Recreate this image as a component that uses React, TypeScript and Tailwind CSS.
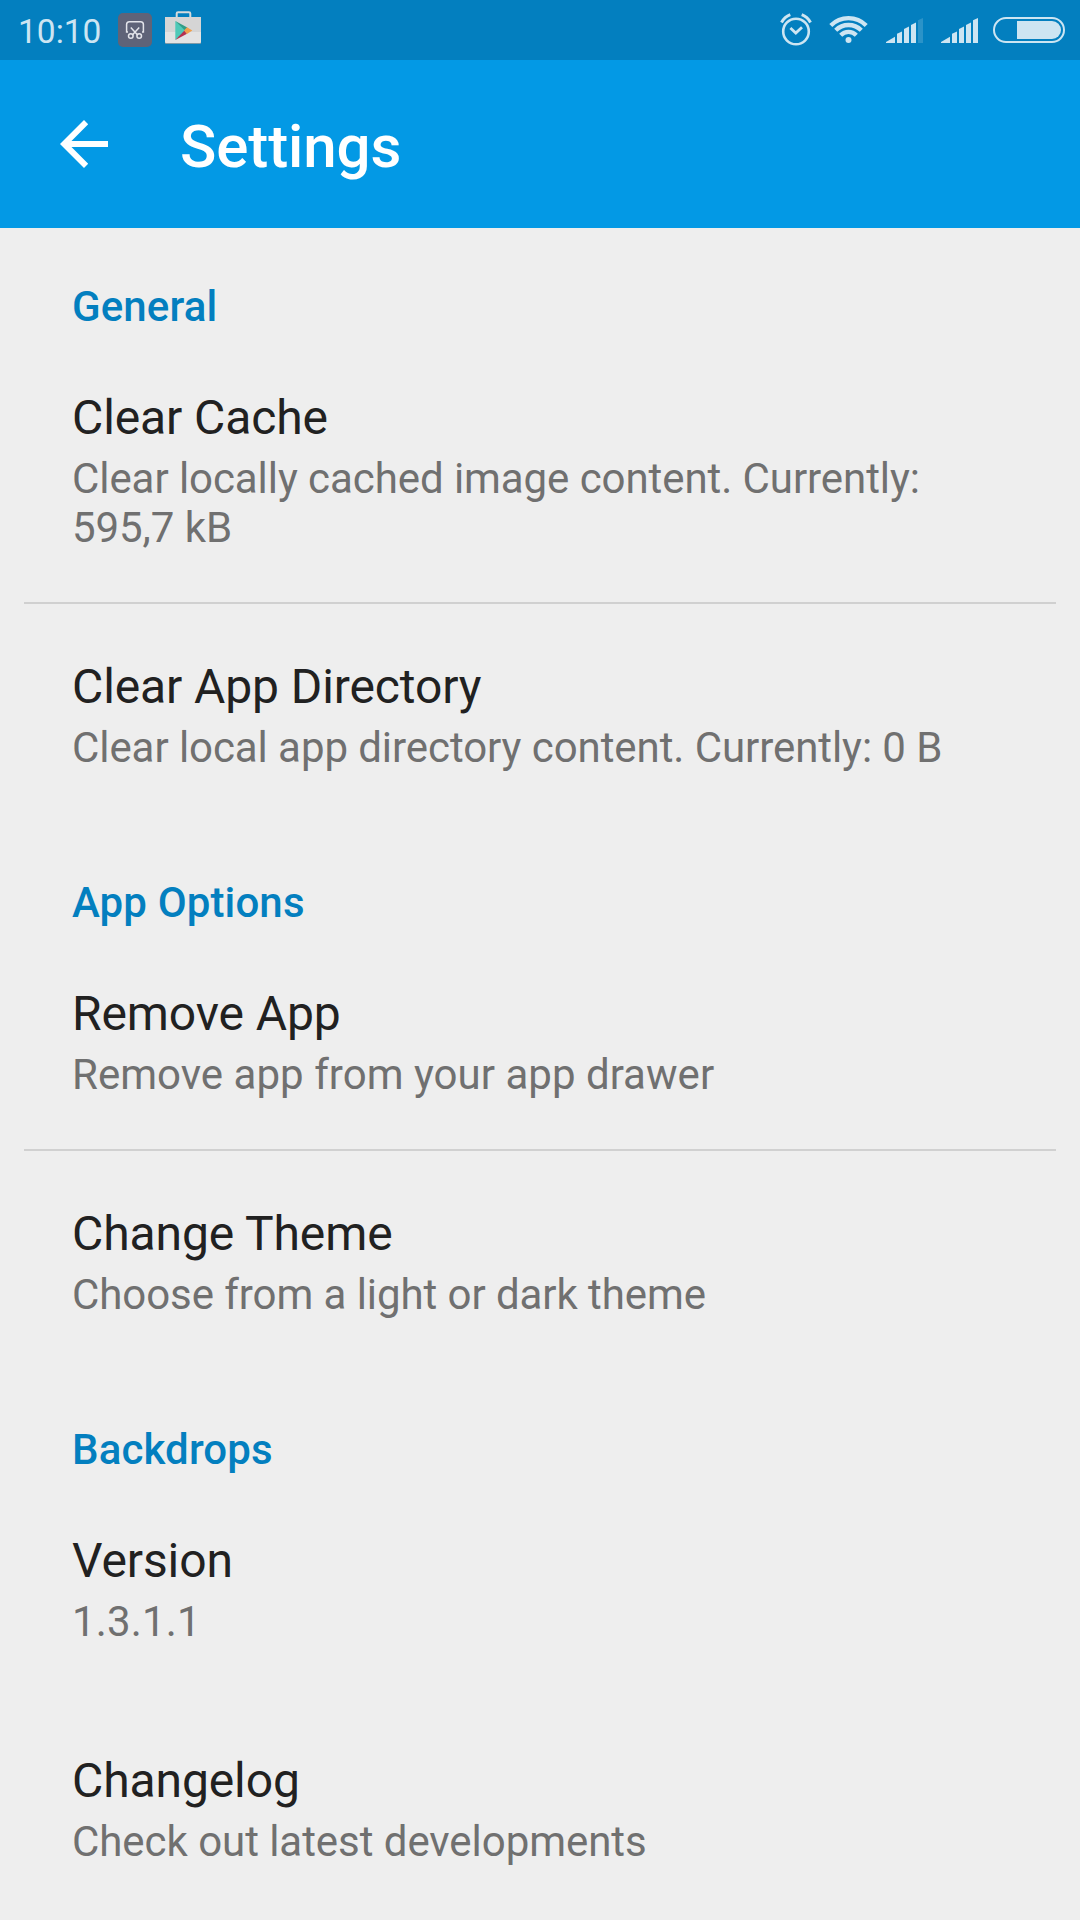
const sections = [
  {
    title: "General",
    divided: true,
    items: [
      { name: "Clear Cache", summary: "Clear locally cached image content. Currently: 595,7 kB", tracking: "tracking-[-0.07px]" },
      { name: "Clear App Directory", summary: "Clear local app directory content. Currently: 0 B", tracking: "tracking-[-0.07px]" }
    ]
  },
  {
    title: "App Options",
    divided: true,
    items: [
      { name: "Remove App", summary: "Remove app from your app drawer", tracking: "tracking-[0.03px]" },
      { name: "Change Theme", summary: "Choose from a light or dark theme", tracking: "tracking-[-0.07px]" }
    ]
  },
  {
    title: "Backdrops",
    divided: false,
    items: [
      { name: "Version", summary: "1.3.1.1", tracking: "tracking-[0.15px]" },
      { name: "Changelog", summary: "Check out latest developments", tracking: "tracking-[-0.05px]" }
    ]
  }
];

function ScreenshotIcon() {
  return (
    <svg width="34" height="34" viewBox="0 0 34 34" fill="none" stroke="#e3e4ea" strokeWidth="1.5">
      <rect width="34" height="34" rx="5" fill="#5f6378" stroke="none" />
      <path d="M10 19H8.6V11.5Q8.6 8.7 11.4 8.7H22.6Q25.4 8.7 25.4 11.5V19H24" />
      <path d="M12.8 14.5L19.6 22M21.2 14.5L14.4 22" />
      <circle cx="12.8" cy="23" r="2.3" />
      <circle cx="21.2" cy="23" r="2.3" />
    </svg>
  );
}

function PlayStoreIcon() {
  return (
    <svg width="36" height="34" viewBox="0 0 36 34">
      <path d="M11.7 7V3.6Q11.7 2.2 13.1 2.2H23.9Q25.3 2.2 25.3 3.6V7" fill="none" stroke="#d6dadb" strokeWidth="2" />
      <rect y="7" width="36" height="27" rx="1" fill="#7f9aa8" />
      <rect y="7" width="36" height="26" rx="1" fill="#e3e3e3" />
      <rect y="7" width="36" height="15" fill="#d5d5d5" />
      <path d="M10.3 11V30L21.5 20.5Z" fill="#4fc9b8" />
      <path d="M10.3 11L22.3 17.4L20 20.5Z" fill="#2f9d86" />
      <path d="M10.3 30L22 23.8L19.5 20.5Z" fill="#b5304f" />
      <path d="M22 17.2L27.3 20.5L22 24L19 20.5Z" fill="#f0a04c" />
    </svg>
  );
}

function AlarmIcon() {
  return (
    <svg width="32" height="34" viewBox="0 0 32 34" fill="none" stroke="#cde5f2">
      <circle cx="16" cy="19.5" r="12.8" strokeWidth="2.6" />
      <path d="M10.4 16L15.8 21L22 15.2" strokeWidth="2.8" />
      <path d="M1.5 10.5Q4.5 5 10.3 2.7M30.5 10.5Q27.5 5 21.7 2.7" strokeWidth="3" />
    </svg>
  );
}

function WifiIcon() {
  return (
    <svg width="39" height="28" viewBox="0 0 39 28" fill="none" stroke="#cde5f2" strokeWidth="4.3">
      <path d="M1.8 10.4A25 25 0 0 1 37.2 10.4" />
      <path d="M6.7 15.3A18.1 18.1 0 0 1 32.3 15.3" />
      <path d="M11.7 20.2A11 11 0 0 1 27.3 20.2" />
      <circle cx="19.5" cy="25" r="3" fill="#cde5f2" stroke="none" />
    </svg>
  );
}

function SignalIcon({ weak = false }: { weak?: boolean }) {
  return (
    <svg width="37" height="25" viewBox="0 0 37 25" fill="#cde5f2">
      <path d="M0 25V24L9 18.8V25Z" />
      <path d="M11 25V15.8L16 13.5V25Z" />
      <path d="M18 25V11L23 8.5V25Z" />
      <path d="M25 25V7L30 4.5V25Z" />
      <path d="M32 25V2.2L37 0V25Z" opacity={weak ? 0.2 : 1} />
    </svg>
  );
}

function BatteryIcon() {
  return (
    <svg width="72" height="26" viewBox="0 0 72 26">
      <rect x="1" y="1" width="70" height="24" rx="12" fill="none" stroke="#cde5f2" strokeWidth="2" />
      <path d="M24 4H59A9 9 0 0 1 59 22H24Z" fill="#cde5f2" />
    </svg>
  );
}

export default function App() {
  return (
    <div className="w-[1080px] h-[1920px] overflow-hidden bg-[#eeeeee] font-['Roboto',sans-serif]">
      {/* Status bar */}
      <div className="flex justify-between h-[60px] bg-[#037fbf]">
        <div className="flex items-start pl-[18px]">
          <span className="w-[100px] mt-[12px] text-[33.5px] leading-[39px] text-[#cde5f2]">10:10</span>
          <div className="mt-[13px]"><ScreenshotIcon /></div>
          <div className="mt-[10px] ml-[13px]"><PlayStoreIcon /></div>
        </div>
        <div className="flex items-start pr-[15px]">
          <div className="mt-[12px]"><AlarmIcon /></div>
          <div className="mt-[15px] ml-[17px]"><WifiIcon /></div>
          <div className="mt-[18px] ml-[18px]"><SignalIcon weak /></div>
          <div className="mt-[18px] ml-[18px]"><SignalIcon /></div>
          <div className="mt-[17px] ml-[15px]"><BatteryIcon /></div>
        </div>
      </div>

      {/* App bar */}
      <header className="flex items-center h-[168px] pl-[60px] bg-[#0399e5]">
        <svg width="48" height="48" viewBox="0 0 48 48" fill="#ffffff">
          <path d="M48 21H11.5L28.2 4.2L24 0L0 24L24 48L28.2 43.8L11.5 27H48Z" />
        </svg>
        <h1 className="ml-[72px] pt-[6px] text-[60px] leading-[70px] font-medium tracking-[-0.1px] text-white">Settings</h1>
      </header>

      <main>
        {sections.map((section) => (
          <section key={section.title}>
            <h2 className="px-[72px] pt-[54px] pb-[4px] text-[42px] leading-[49px] font-medium tracking-[0.13px] text-[#037fbf]">
              {section.title}
            </h2>
            {section.items.map((item, index) => (
              <div key={item.name}>
                <div className="px-[72px] pt-[55px] pb-[50px]">
                  <h3 className="text-[48px] leading-[56px] tracking-[-0.1px] text-[#212121]">{item.name}</h3>
                  <p className={`mt-[8px] text-[42px] leading-[49px] text-[#707070] ${item.tracking}`}>{item.summary}</p>
                </div>
                {/* The divider keeps its height where it is not shown */}
                <div className={section.divided && index === 0 ? "h-[2px] mx-6 bg-[#d0d0d0]" : "h-[2px] mx-6"} />
              </div>
            ))}
          </section>
        ))}
      </main>
    </div>
  );
}
